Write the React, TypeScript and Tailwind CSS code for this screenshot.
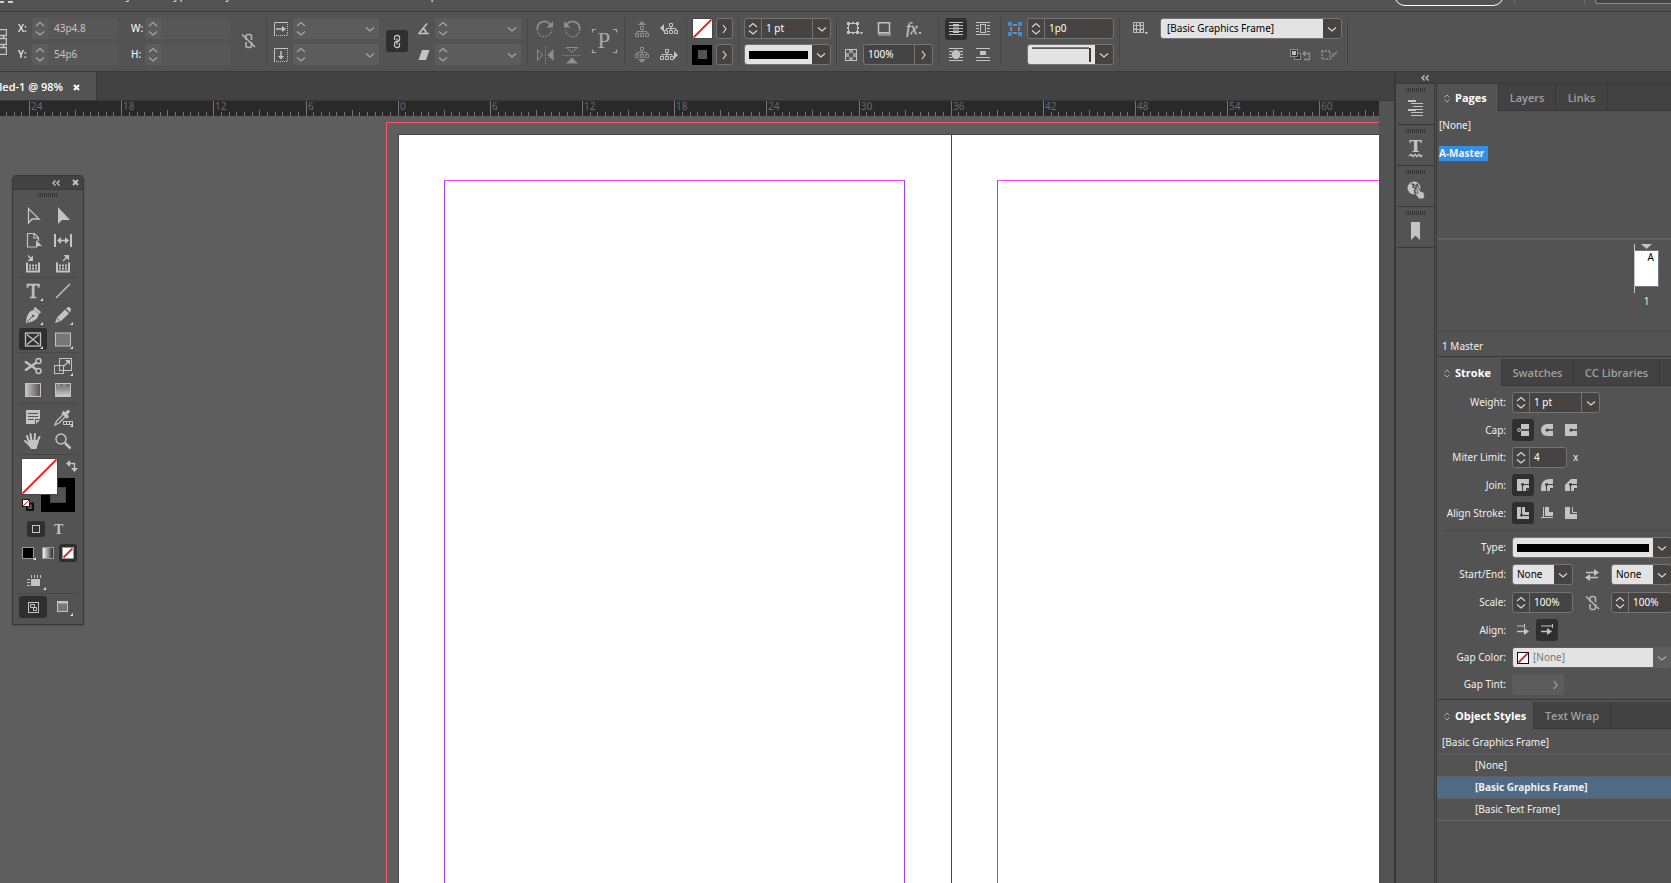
import type { ReactNode } from "react";

const ICON = "#c3c3c3";
const DIM = "#8e8e8e";

/* ---------- small shared parts ---------- */

function Chevron({ dir, dim }: { dir: "up" | "down" | "right"; dim?: boolean }) {
  const color = dim ? "#a8a8a8" : "#d6d6d6";
  const d = { up: "M1 5 L5 1.5 L9 5", down: "M1 1.5 L5 5 L9 1.5", right: "M2 1 L5 5 L2 9" }[dir];
  return (
    <svg
      width={dir === "right" ? 7 : 10}
      height={dir === "right" ? 10 : 6}
      fill="none"
      stroke={color}
      strokeWidth="1.2"
      aria-hidden="true"
    >
      <path d={d} />
    </svg>
  );
}

function Stepper({ name, flat }: { name: string; flat?: boolean }) {
  return (
    <span className={`flex w-4 shrink-0 flex-col items-center justify-between py-[3px] ${flat ? "bg-[#5c5c5c]" : ""}`}>
      <button aria-label={`Increase ${name}`}>
        <Chevron dir="up" dim={flat} />
      </button>
      <button aria-label={`Decrease ${name}`}>
        <Chevron dir="down" dim={flat} />
      </button>
    </span>
  );
}

type FieldProps = {
  name: string;
  id?: string;
  value?: string;
  width: string;
  stepper?: boolean;
  menu?: "down" | "right";
  flat?: boolean;
};

function Field({ name, id, value = "", width, stepper = true, menu, flat }: FieldProps) {
  return (
    <div
      className={`flex h-[21px] shrink-0 items-stretch overflow-hidden rounded-[3px] ${width} ${
        flat ? (menu ? "bg-[#5c5c5c]" : "bg-[#575757]") : "border border-[#747474] bg-[#454442]"
      }`}
    >
      {stepper && <Stepper name={name} flat={flat} />}
      <input
        id={id}
        aria-label={name}
        defaultValue={value}
        className={`w-0 min-w-0 flex-1 bg-transparent outline-none ${
          flat ? "pl-1.5 text-[#c4c4c4]" : "pl-1 text-white"
        } ${stepper && !flat ? "border-l border-[#747474]" : ""}`}
      />
      {menu && (
        <button
          aria-label={`${name} options`}
          className={`flex w-[18px] items-center justify-center ${flat ? "" : "border-l border-[#747474]"}`}
        >
          <Chevron dir={menu} dim={flat} />
        </button>
      )}
    </div>
  );
}

function Select({ name, id, value, width, dim, children }: { name: string; id?: string; value: string; width: string; dim?: boolean; children?: ReactNode }) {
  return (
    <div
      className={`flex h-[21px] shrink-0 items-stretch overflow-hidden rounded-[3px] border ${width} ${
        dim ? "border-[#5e5e5e] bg-[#5e5e5e]" : "border-[#747474] bg-[#454442]"
      }`}
    >
      <div className="flex flex-1 items-center bg-[#e3e3e3]">
        {children}
        <select
          id={id}
          aria-label={name}
          className={`h-full w-0 flex-1 appearance-none bg-transparent outline-none ${dim ? "pl-1 text-[#777]" : "text-black"} ${
            width === "w-[182px]" ? "pl-1.5" : "pl-1"
          }`}
        >
          <option>{value}</option>
        </select>
      </div>
      <span className="flex w-[18px] items-center justify-center">
        <Chevron dir="down" dim={dim} />
      </span>
    </div>
  );
}

function LineMenu({ name, id, width, children }: { name: string; id?: string; width: string; children: ReactNode }) {
  return (
    <button
      id={id}
      aria-label={name}
      aria-haspopup="listbox"
      className={`flex h-[21px] shrink-0 items-stretch overflow-hidden rounded-[3px] border border-[#747474] bg-[#454442] ${width}`}
    >
      <span className="flex min-w-0 flex-1 items-center bg-[#e3e3e3] px-1">{children}</span>
      <span className="flex w-[18px] shrink-0 items-center justify-center">
        <Chevron dir="down" />
      </span>
    </button>
  );
}

function IconButton({ name, active, size = "h-[22px] w-[22px]", children }: { name: string; active?: boolean; size?: string; children: ReactNode }) {
  return (
    <button
      aria-label={name}
      className={`flex shrink-0 items-center justify-center rounded-[3px] ${size} ${active ? "bg-[#2f2f2f]" : ""}`}
    >
      {children}
    </button>
  );
}

function Svg({ w, h, children }: { w: number; h: number; children: ReactNode }) {
  return (
    <svg width={w} height={h} viewBox={`0 0 ${w} ${h}`} fill="none" stroke={ICON} className="shrink-0" aria-hidden="true">
      {children}
    </svg>
  );
}

function Divider() {
  return <span className="h-[47px] w-px shrink-0 bg-[#474747]" />;
}

// two stacked 21px rows of the control bar
function Pair({ className = "", children }: { className?: string; children: ReactNode }) {
  return <div className={`grid shrink-0 grid-rows-[21px_21px] items-center gap-y-[5px] ${className}`}>{children}</div>;
}

function BrokenLink() {
  return (
    <Svg w={15} h={16}>
      <g stroke="#b5b5b5" strokeWidth="1.6">
        <path d="M5 7V3.5A2 2 0 0 1 7 1.5H8.5A2 2 0 0 1 10.5 3.5V7M5 9V12.5A2 2 0 0 0 7 14.5H8.5A2 2 0 0 0 10.5 12.5V9" />
        <path d="M1 1.5L14 14" />
      </g>
    </Svg>
  );
}

function NoneSwatch({ size, border }: { size: number; border: string }) {
  return (
    <svg width={size} height={size} viewBox={`0 0 ${size} ${size}`} className="shrink-0" aria-hidden="true">
      <rect x="0.5" y="0.5" width={size - 1} height={size - 1} fill="#fff" stroke={border} />
      <path d={`M1.5 ${size - 1.5}L${size - 1.5} 1.5`} stroke="#e82020" strokeWidth="1.8" />
    </svg>
  );
}

/* ---------- control bar icons ---------- */

function BoxArrow({ down }: { down?: boolean }) {
  return (
    <Svg w={14} h={14}>
      <path d="M0.5 14V0.5H14" />
      <path d="M13.5 2V14M2 13.5H14" strokeDasharray="1 1" />
      {down ? (
        <>
          <path d="M7 3V10" strokeWidth="1.5" />
          <path d="M4 8H10L7 11.500Z" fill={ICON} stroke="none" />
        </>
      ) : (
        <>
          <path d="M2 7H9" strokeWidth="1.5" />
          <path d="M8 4V10L12 7Z" fill={ICON} stroke="none" />
        </>
      )}
    </Svg>
  );
}

function Rotate({ ccw }: { ccw?: boolean }) {
  return (
    <Svg w={18} h={18}>
      <g transform={ccw ? "translate(18 0) scale(-1 1)" : undefined} stroke={DIM}>
        <path d="M1.5 9.5A7 7 0 0 1 14.5 5" strokeWidth="2" />
        <path d="M1.5 9.5A7 7 0 0 0 15.5 10" strokeWidth="1.5" strokeDasharray="1.5 1.5" />
        <path d="M17 1V7.5H10.500Z" fill={DIM} stroke="none" />
      </g>
    </Svg>
  );
}

function Flip({ vertical }: { vertical?: boolean }) {
  return (
    <Svg w={18} h={18}>
      <g transform={vertical ? "rotate(90 9 9)" : undefined} stroke={DIM}>
        <path d="M1.5 3.5L6.5 9L1.5 14.500Z" />
        <path d="M17.5 3V15L11.5 9Z" fill={DIM} stroke="none" />
        <path d="M9.5 1V18" strokeDasharray="1 1" />
      </g>
    </Svg>
  );
}

function Tree({ y = 0, x = 0, color }: { y?: number; x?: number; color: string }) {
  return (
    <g transform={`translate(${x} ${y})`} stroke={color}>
      <path d="M5.5 0.5H8.5V3.5H5.5ZM0.5 7.5H3.5V10.5H0.5ZM5.5 7.5H8.5V10.5H5.5ZM10.5 7.5H13.5V10.5H10.5ZM7 3.5V7.5M2 7.5V5.5H12V7.5" />
    </g>
  );
}

function WrapLines({ kind }: { kind: "none" | "box" | "shape" | "jump" }) {
  return (
    <Svg w={14} h={13}>
      {kind === "none" && (
        <>
          <path d="M0 0.5H14M0 3.5H14M0 6.5H14M0 9.5H14M0 12.5H14" />
          <rect x="4" y="2" width="6" height="9" fill={ICON} stroke="none" />
          <path d="M4 5H10M4 8H10" stroke="#2f2f2f" />
        </>
      )}
      {kind === "box" && (
        <>
          <path d="M0 0.5H14M0 3.5H3M11 3.5H14M0 6.5H3M11 6.5H14M0 9.5H3M11 9.5H14M0 12.5H14" />
          <rect x="4.5" y="2.5" width="5" height="8" />
        </>
      )}
      {kind === "shape" && (
        <>
          <path d="M0 0.5H14M0 3.5H3M11 3.5H14M0 6.5H2M12 6.5H14M0 9.5H3M11 9.5H14M0 12.5H14" />
          <circle cx="7" cy="6.5" r="4.5" fill={ICON} stroke="none" />
        </>
      )}
      {kind === "jump" && (
        <>
          <path d="M0 0.5H14M0 9.5H14M0 12.5H14" />
          <rect x="4" y="3" width="6" height="4" fill={ICON} stroke="none" />
        </>
      )}
    </Svg>
  );
}

function ControlBar() {
  return (
    <header className="flex h-[60px] shrink-0 items-start overflow-hidden border-b border-[#3a3a3a] bg-[#535353] pt-1.5">
      <div className="flex h-[47px] items-center">
        <Svg w={7} h={26}>
          <path d="M0 0.5H6.5V6.5H0M0 9.5H6.5V15.5H0M0 18.5H6.5V25.5H0M3.5 6.5V9.5M3.5 15.5V18.5" strokeWidth="1.5" />
        </Svg>
      </div>

      <Pair className="ml-[11px] grid-cols-[14px_86px]">
        <label htmlFor="pos-x" className="font-medium">X:</label>
        <Field id="pos-x" name="X" value="43p4.8" width="w-[86px]" flat />
        <label htmlFor="pos-y" className="font-medium">Y:</label>
        <Field id="pos-y" name="Y" value="54p6" width="w-[86px]" flat />
      </Pair>
      <Pair className="ml-[13px] grid-cols-[14px_86px]">
        <label htmlFor="size-w" className="font-medium">W:</label>
        <Field id="size-w" name="W" width="w-[86px]" flat />
        <label htmlFor="size-h" className="font-medium">H:</label>
        <Field id="size-h" name="H" width="w-[86px]" flat />
      </Pair>
      <button aria-label="Constrain proportions" className="mx-2.5 flex h-[45px] items-center">
        <BrokenLink />
      </button>
      <Divider />

      <Pair className="ml-[7px] grid-cols-[14px_86px] gap-x-[5px]">
        <BoxArrow />
        <Field name="Scale X" width="w-[86px]" menu="down" flat />
        <BoxArrow down />
        <Field name="Scale Y" width="w-[86px]" menu="down" flat />
      </Pair>
      <div className="mx-[7px] flex h-[46px] items-center">
        <IconButton name="Link scaling" active>
          <Svg w={8} h={15}>
            <path d="M1.5 6V3.5A2 2 0 0 1 3.5 1.5H4.5A2 2 0 0 1 6.5 3.5V5.5A2 2 0 0 1 4.5 7.5M6.5 9V11.5A2 2 0 0 1 4.5 13.5H3.5A2 2 0 0 1 1.5 11.5V9.5A2 2 0 0 1 3.5 7.5M4 4.5V10.5" strokeWidth="1.3" />
          </Svg>
        </IconButton>
      </div>
      <Pair className="ml-[3px] mr-1.5 grid-cols-[12px_86px] gap-x-[5px]">
        <Svg w={12} h={12}>
          <path d="M9 0.5L1 10.5H11M5 5.5Q8 7 8 10.5" strokeWidth="1.5" />
        </Svg>
        <Field name="Rotation" width="w-[86px]" menu="down" flat />
        <Svg w={12} h={12}>
          <path d="M4 1H11.5L8 11H0.500Z" fill={ICON} stroke="none" />
        </Svg>
        <Field name="Shear" width="w-[86px]" menu="down" flat />
      </Pair>
      <Divider />

      <Pair className="ml-2 grid-cols-[18px_18px] gap-x-[9px]">
        <button aria-label="Rotate clockwise"><Rotate /></button>
        <button aria-label="Rotate counter-clockwise"><Rotate ccw /></button>
        <button aria-label="Flip horizontal"><Flip /></button>
        <button aria-label="Flip vertical"><Flip vertical /></button>
      </Pair>
      <div className="ml-2.5 mr-1.5 flex h-[46px] items-center">
        <Svg w={27} h={26}>
          <path d="M1.5 4.5V1.5H5M22 1.5H25.5V4.5M1.5 21.5V24.5H5M22 24.5H25.5V21.5" stroke="#a8a8a8" strokeWidth="1.2" />
          <text x="13" y="20" textAnchor="middle" fontSize="23" fontFamily="Liberation Serif, serif" fill="#a8a8a8" stroke="none">P</text>
        </Svg>
      </div>
      <Divider />

      <Pair className="ml-[9px] mr-[7px] grid-cols-[16px_20px] gap-x-[9px]">
        <Svg w={16} h={18}>
          <path d="M8 1L12 5H4Z" fill={DIM} stroke="none" />
          <Tree x={1} y={6} color={DIM} />
        </Svg>
        <Svg w={20} h={13}>
          <path d="M1 6L5 2V10Z" fill={ICON} stroke="none" />
          <Tree x={5} y={1} color={ICON} />
        </Svg>
        <Svg w={16} h={18}>
          <Tree x={1} y={1} color={DIM} />
          <path d="M8 17L12 13H4Z" fill={DIM} stroke="none" />
        </Svg>
        <Svg w={20} h={13}>
          <Tree x={1} y={1} color={ICON} />
          <path d="M19 7L15 3V11Z" fill={ICON} stroke="none" />
        </Svg>
      </Pair>
      <Divider />

      <Pair className="mx-[5px] grid-cols-[20px_17px] gap-x-1">
        <NoneSwatch size={21} border="#484848" />
        <button aria-label="Fill options" className="flex h-[21px] items-center justify-center rounded-[3px] border border-[#747474] bg-[#454442]">
          <Chevron dir="right" />
        </button>
        <span className="flex h-5 w-5 items-center justify-center bg-black">
          <span className="h-[9px] w-[9px] bg-[#535353]" />
        </span>
        <button aria-label="Stroke options" className="flex h-[21px] items-center justify-center rounded-[3px] border border-[#747474] bg-[#454442]">
          <Chevron dir="right" />
        </button>
      </Pair>
      <Divider />

      <Pair className="mx-[5px]">
        <Field name="Stroke weight" value="1 pt" width="w-[87px]" menu="down" />
        <LineMenu name="Stroke style" width="w-[87px]">
          <span className="h-2 flex-1 bg-black" />
        </LineMenu>
      </Pair>
      <Divider />

      <Pair className="ml-2 mr-[5px]">
        <div className="flex items-center gap-3.5 pl-0.5">
          <button aria-label="Effects target">
            <Svg w={16} h={13}>
              <rect x="1.5" y="1.5" width="9" height="9" />
              <path d="M0 0H3V3H0ZM9 0H12V3H9ZM0 9H3V12H0ZM9 9H12V12H9ZM5 0H7V2H5ZM5 10H7V12H5ZM0 5H2V7H0ZM10 5H12V7H10Z" fill={ICON} stroke="none" />
              <path d="M12.500 10H16L14.5 12.500Z" fill={ICON} stroke="none" />
            </Svg>
          </button>
          <button aria-label="Drop shadow">
            <Svg w={14} h={14}>
              <path d="M1 11H14V14H1Z" fill="#8a8a8a" stroke="none" />
              <rect x="1.5" y="0.75" width="11" height="10" strokeWidth="1.5" />
            </Svg>
          </button>
          <button aria-label="Effects">
            <Svg w={18} h={16}>
              <text x="1" y="13" fontSize="16" fontStyle="italic" fontFamily="Liberation Serif, serif" fill={ICON} strokeWidth="0.3">fx</text>
              <path d="M13.5 11H16.5L15 13.500Z" fill={ICON} stroke="none" />
            </Svg>
          </button>
        </div>
        <div className="flex items-center gap-1.5">
          <Svg w={12} h={12}>
            <rect x="0.5" y="0.5" width="11" height="11" />
            <path d="M4 1H8V4H4ZM1 4H4V8H1ZM8 4H11V8H8ZM4 8H8V11H4Z" fill="#9a9a9a" stroke="none" />
          </Svg>
          <Field name="Opacity" value="100%" width="w-[70px]" stepper={false} menu="right" />
        </div>
      </Pair>
      <Divider />

      <Pair className="mx-1.5 grid-cols-[22px_22px] gap-x-[5px]">
        <IconButton name="No text wrap" active><WrapLines kind="none" /></IconButton>
        <IconButton name="Wrap around bounding box"><WrapLines kind="box" /></IconButton>
        <IconButton name="Wrap around object shape"><WrapLines kind="shape" /></IconButton>
        <IconButton name="Jump object"><WrapLines kind="jump" /></IconButton>
      </Pair>
      <Divider />

      <Pair className="ml-[7px] mr-[5px] grid-cols-[14px_87px] gap-x-[5px]">
        <Svg w={14} h={14}>
          <path d="M5 3H9M5 11H9M3 5V9M11 5V9" stroke="#8a8a8a" strokeWidth="2" />
          <path d="M0 0H4V4H0ZM10 0H14V4H10ZM0 10H4V14H0ZM10 10H14V14H10Z" fill="#318fe9" stroke="none" />
        </Svg>
        <Field name="Gap" value="1p0" width="w-[87px]" />
        <span />
        <LineMenu name="Corner shape" width="w-[87px]">
          <svg viewBox="0 0 60 17" className="h-[17px] min-w-0 flex-1" aria-hidden="true">
            <path d="M0 2H58" stroke="#5a5a5a" strokeWidth="2" />
            <path d="M59 2V16" stroke="#000" strokeWidth="1.5" />
          </svg>
        </LineMenu>
      </Pair>
      <Divider />

      <Pair className="ml-[13px] mr-[5px] grid-cols-[15px_182px] gap-x-3">
        <Svg w={15} h={13}>
          <path d="M0.5 0.5H3.5V3.5H0.5ZM4 0.500H7V3.500H4M7.500 0.500H10.500V3.500H7.500ZM0.500 4V7H3.500V4M7.500 4V7H10.500V4M0.500 7.500H3.500V10.500H0.500ZM4 7.500H7V10.500H4M7.500 7.500H10.500V10.500H7.500Z" />
          <path d="M11.500 10H15L13.5 12.500Z" fill={ICON} stroke="none" />
        </Svg>
        <Select name="Object style" value="[Basic Graphics Frame]" width="w-[182px]" />
        <span />
        <div className="flex items-center justify-end gap-2.5 pr-1">
          <button aria-label="Clear overrides">
            <Svg w={21} h={12}>
              <path d="M8 4.5H10.5V10.5H4.5V8" stroke={DIM} />
              <path d="M5 8V10H10V5H8V8Z" fill="#333" stroke="none" />
              <rect x="0.5" y="0.5" width="7" height="7" fill="#333" stroke={DIM} />
              <rect x="2" y="2" width="4" height="4" fill="#bbb" stroke="none" />
              <path d="M13 4.5H19.5V10.5H14M15.5 2L13 4.5L15.5 7" stroke={DIM} strokeWidth="1.3" />
            </Svg>
          </button>
          <button aria-label="Clear undefined attributes">
            <Svg w={17} h={12}>
              <rect x="1" y="2" width="8" height="8" stroke={DIM} strokeDasharray="2 1" strokeWidth="1.5" />
              <path d="M10 9L16 2M12 5H16M12 4V8" stroke={DIM} />
            </Svg>
          </button>
        </div>
      </Pair>
      <Divider />
    </header>
  );
}

/* ---------- menu strip ---------- */

function MenuStrip() {
  const menus = ["File", "Edit", "Layout", "Type", "Object", "Table", "View", "Window", "Help"];
  return (
    <nav className="flex h-3 shrink-0 items-end justify-between overflow-hidden border-b border-[#3a3a3a] bg-[#535353]">
      <div className="flex h-full items-end gap-4 pb-2">
        <span className="mr-[11px] flex gap-1">
          <span className="h-0.5 w-1 bg-[#d0d0d0]" />
          <span className="h-0.5 w-[5px] bg-[#d0d0d0]" />
        </span>
        {menus.map((m) => (
          <button key={m} className="h-4 text-[12px] leading-4 text-[#dcdcdc]">
            {m}
          </button>
        ))}
      </div>
      <div className="flex h-full items-start">
        <button aria-label="Workspace" className="-mt-4 h-[22px] w-[110px] rounded-full border border-white" />
        <span className="ml-2.5 h-1 w-px bg-[#6a6a6a]" />
        <span className="ml-[69px] mr-2.5 h-1 w-px bg-[#6a6a6a]" />
        <input aria-label="Search" className="-mt-4 h-5 w-[76px] rounded-bl-[3px] border border-r-0 border-[#8a8a8a] bg-[#454442]" />
      </div>
    </nav>
  );
}

/* ---------- document ---------- */

const MAJOR = 92.17;
const rulerMarks = ["24", "18", "12", "6", "0", "6", "12", "18", "24", "30", "36", "42", "48", "54", "60"];

function Ruler() {
  const ticks = [];
  for (let i = -3; i < 178; i++) {
    const x = Math.round(29 + (i * MAJOR) / 12) + 0.5;
    const top = i % 12 === 0 ? 0 : i % 6 === 0 ? 9 : 11;
    ticks.push(`M${x} ${top}V15`);
  }
  return (
    <svg className="block h-[15px] w-full bg-[#292929]" aria-hidden="true">
      <path d={ticks.join("")} stroke="#757575" fill="none" />
      {rulerMarks.map((m, i) => (
        <text key={i} x={Math.round(29 + i * MAJOR) + 2} y="9" fontSize="10" fill="#6a6a6a">
          {m}
        </text>
      ))}
    </svg>
  );
}

function Pasteboard() {
  return (
    <div className="flex min-h-0 flex-1 overflow-hidden bg-[#5e5e5e] pl-[386px] pt-1.5">
      <div className="flex w-full shrink-0 border-l border-t border-[#f5566a] pl-[11px] pt-[11px]">
        <div className="w-[554px] shrink-0 border border-b-0 border-[#444] bg-white pl-[45px] pr-[46px] pt-[45px]">
          <div className="h-full border border-b-0 border-[#9d3cf5] border-t-[#ff4dff]" />
        </div>
        <div className="w-[554px] shrink-0 border-t border-[#444] bg-white pl-[45px] pt-[45px]">
          <div className="h-full border border-b-0 border-[#9d3cf5] border-t-[#ff4dff]" />
        </div>
      </div>
    </div>
  );
}

/* ---------- floating tools ---------- */

const corner = <path d="M20 17V20H17Z" fill="#e0e0e0" stroke="none" />;

const tools: { name: string; active?: boolean; art: ReactNode }[][] = [
  [
    { name: "Selection", art: <path d="M5.5 2.5V17L9 13H16Z" strokeWidth="1.3" /> },
    { name: "Direct selection", art: <path d="M5 1V18L9 14H17Z" fill={ICON} stroke="none" /> },
    {
      name: "Page",
      art: (
        <>
          <path d="M13 17H4.5V3.5H11.5L15.5 7.5V11M11 3.5V8H15.5" strokeWidth="1.2" />
          <path d="M13 10V18L15 16H19Z" fill={ICON} stroke="none" />
        </>
      ),
    },
    {
      name: "Gap",
      art: (
        <>
          <path d="M2 4V17M18 4V17" strokeWidth="2" />
          <path d="M5 10.5H15" strokeWidth="1.5" />
          <path d="M4 10.5L8 7V14ZM16 10.5L12 7V14Z" fill={ICON} stroke="none" />
        </>
      ),
    },
    {
      name: "Content collector",
      art: (
        <>
          <path d="M4 8.5V17.5H16V8.5" strokeWidth="2" />
          <path d="M6 11.5H14M6 14.5H14" strokeWidth="2" strokeDasharray="2 1" />
          <path d="M5 1.5L9 5.5" strokeWidth="1.5" />
          <path d="M10 1.5V7H4.500Z" fill={ICON} stroke="none" />
        </>
      ),
    },
    {
      name: "Content placer",
      art: (
        <>
          <path d="M4 8.5V17.5H16V8.5" strokeWidth="2" />
          <path d="M6 11.5H14M6 14.5H14" strokeWidth="2" strokeDasharray="2 1" />
          <path d="M10 7L14 3" strokeWidth="1.5" />
          <path d="M16 1V6.5L10.5 1Z" fill={ICON} stroke="none" />
        </>
      ),
    },
  ],
  [
    {
      name: "Type",
      art: (
        <>
          <text x="10" y="17" textAnchor="middle" fontSize="19" fontFamily="DejaVu Serif, serif" fill={ICON} strokeWidth="0.6">T</text>
          {corner}
        </>
      ),
    },
    { name: "Line", art: <path d="M3 17L17 3" strokeWidth="1.5" /> },
    {
      name: "Pen",
      art: (
        <>
          <path d="M11.5 4.5L16 9L14 13.5Q10 17 3 18Q3 11 7 6.500Z" fill={ICON} stroke="none" />
          <path d="M12 2L18 7L16.5 9L10.5 3.500Z" fill={ICON} stroke="none" />
          <path d="M4 17L9.5 11.5" stroke="#535353" />
          <circle cx="10" cy="11" r="1.2" fill="#535353" stroke="none" />
          {corner}
        </>
      ),
    },
    {
      name: "Pencil",
      art: (
        <>
          <path d="M2 18L4 12.5L12 4.5L16 8.5L8 16ZM13 3.5L15 2Q18 2 18 5L17 7.500Z" fill={ICON} stroke="none" />
          <path d="M4 13L7.5 16.5" stroke="#535353" strokeWidth="0.8" />
          {corner}
        </>
      ),
    },
    {
      name: "Rectangle frame",
      active: true,
      art: (
        <>
          <rect x="2.5" y="4" width="15" height="13" strokeWidth="1.3" />
          <path d="M4 5.5L16 15.5M16 5.5L4 15.5" strokeWidth="1.3" />
          {corner}
        </>
      ),
    },
    {
      name: "Rectangle",
      art: (
        <>
          <rect x="2.5" y="4" width="15" height="13" fill="#77777a" />
          {corner}
        </>
      ),
    },
  ],
  [
    {
      name: "Scissors",
      art: (
        <>
          <circle cx="15.5" cy="5" r="2.5" strokeWidth="1.5" />
          <circle cx="15.5" cy="15" r="2.5" strokeWidth="1.5" />
          <path d="M2 5.5L13.5 13.5M2 14.5L13.5 6.5" strokeWidth="2.2" />
        </>
      ),
    },
    {
      name: "Free transform",
      art: (
        <>
          <rect x="6.5" y="2.5" width="12" height="12" />
          <rect x="1.5" y="9.5" width="9" height="8" />
          <path d="M11 10L15 6" strokeWidth="1.3" />
          <path d="M17 4V9L12 4Z" fill={ICON} stroke="none" />
          {corner}
        </>
      ),
    },
    { name: "Gradient swatch", art: <rect x="2.5" y="3.5" width="15" height="13" fill="url(#grad-h)" /> },
    {
      name: "Gradient feather",
      art: (
        <>
          <rect x="2.5" y="3.5" width="15" height="13" fill="url(#grad-v)" />
          <path d="M4 5.5H16M7 8.5H17" stroke="#8c8c8c" strokeWidth="3" strokeDasharray="3 3" />
        </>
      ),
    },
  ],
  [
    {
      name: "Note",
      art: (
        <>
          <path d="M3 3H17V13L13 17H3Z" fill={ICON} stroke="none" />
          <path d="M5 6.5H15M5 9.5H15M5 12.5H11M12.5 17V12.5H17" stroke="#535353" />
        </>
      ),
    },
    {
      name: "Eyedropper",
      art: (
        <>
          <path d="M2 18L3.5 14L10.5 7L13 9L6 16Z" strokeWidth="1.3" />
          <path d="M9.5 5L15 10.5M12 8L16 3.5" strokeWidth="3.2" />
          <rect x="10.5" y="14.5" width="9" height="3" />
          <path d="M13.5 14V18M16.5 14V18" />
          {corner}
        </>
      ),
    },
    {
      name: "Hand",
      art: (
        <>
          <path d="M6 11L4 5M8.5 10L7.500 3M11.5 10L12 3M14 11L16.500 6M6.500 14L2 10" strokeWidth="2" strokeLinecap="round" />
          <path d="M5.500 9H14.500L16 9.5L13.5 18H8L4.500 13Z" fill={ICON} stroke="none" />
        </>
      ),
    },
    {
      name: "Zoom",
      art: (
        <>
          <circle cx="8" cy="8" r="5" strokeWidth="1.5" />
          <path d="M12 12L17.5 17.5" strokeWidth="2.5" />
        </>
      ),
    },
  ],
];

function Grip() {
  return (
    <svg width="20" height="4" className="shrink-0" aria-hidden="true">
      <path d="M0 2H20" stroke="#333" strokeWidth="4" strokeDasharray="1 1" />
    </svg>
  );
}

function DoubleChevron() {
  return (
    <svg width="8" height="6" className="block" fill="none" stroke="#c8c8c8" strokeWidth="1.3" aria-hidden="true">
      <path d="M3.5 0.5L1 3L3.5 5.5M7.5 0.5L5 3L7.5 5.5" />
    </svg>
  );
}

function ToolsPanel() {
  return (
    <aside className="absolute left-3 top-[103px] w-[72px] rounded-t-[4px] border border-[#383838] bg-[#535353] pb-1.5 shadow-sm">
      <div className="flex h-[14px] items-center justify-end gap-3 border-b border-[#383838] bg-[#424242] pr-1">
        <button aria-label="Collapse tools"><DoubleChevron /></button>
        <button aria-label="Close tools">
          <Svg w={7} h={7}><path d="M1 1L6 6M6 1L1 6" strokeWidth="2" /></Svg>
        </button>
      </div>
      <div className="flex h-[14px] items-start justify-center pt-[3px]"><Grip /></div>

      <svg width="0" height="0" className="block" aria-hidden="true">
        <linearGradient id="grad-h"><stop stopColor="#c8c8c8" /><stop offset="1" stopColor="#555052" /></linearGradient>
        <linearGradient id="grad-w"><stop stopColor="#fff" /><stop offset="1" stopColor="#222" /></linearGradient>
        <linearGradient id="grad-v" x2="0" y2="1"><stop stopColor="#666" /><stop offset="1" stopColor="#ccc" /></linearGradient>
      </svg>

      {tools.map((group, g) => (
        <div key={g} className="px-[5px]">
          <div className="grid grid-cols-2">
            {group.map((t) => (
              <button key={t.name} aria-label={t.name} className="flex h-6 items-center justify-center">
                <span className={`flex h-[22px] w-7 items-center justify-center rounded-[3px] ${t.active ? "bg-[#2f2f2f]" : ""}`}>
                  <svg width="22" height="20" viewBox="0 0 20 20" fill="none" stroke={ICON} className="overflow-visible" aria-hidden="true">
                    {t.art}
                  </svg>
                </span>
              </button>
            ))}
          </div>
          <hr className="my-px border-[#484848]" />
        </div>
      ))}

      {/* fill swatch lies over the stroke swatch */}
      <div className="relative h-[61px]">
        <button aria-label="Stroke" className="absolute left-7 top-[22px] flex h-[34px] w-[34px] items-center justify-center bg-black">
          <span className="h-4 w-4 border border-[#444] bg-[#535353]" />
        </button>
        <button aria-label="Fill" className="absolute left-2 top-[2px]"><NoneSwatch size={37} border="#484848" /></button>
        <button aria-label="Swap fill and stroke" className="absolute left-[53px] top-1">
          <Svg w={12} h={12}>
            <path d="M3 3.5H8.5V9" strokeWidth="1.3" />
            <path d="M0 3.5L4 0V7ZM8.5 12L5 8H12Z" fill={ICON} stroke="none" />
          </Svg>
        </button>
        <button aria-label="Default fill and stroke" className="absolute left-[9px] top-[43px]">
          <Svg w={12} h={12}>
            <rect x="5" y="4.5" width="6" height="6.5" stroke="#111" strokeWidth="2" />
            <rect x="0.5" y="0.5" width="7" height="7" fill="#fff" stroke="#222" />
            <path d="M1 7L7 1" stroke="#e82020" />
          </Svg>
        </button>
      </div>

      <div className="flex h-6 items-center gap-[9px] pl-3.5">
        <IconButton name="Formatting affects container" active size="h-4 w-[18px]">
          <Svg w={8} h={8}><rect x="0.5" y="0.5" width="7" height="7" /></Svg>
        </IconButton>
        <button aria-label="Formatting affects text" className="font-['Liberation_Serif',serif] text-[14px] font-bold text-[#c3c3c3]">T</button>
      </div>
      <div className="flex h-6 items-center pl-[9px]">
        <button aria-label="Apply color">
          <Svg w={15} h={13}>
            <rect x="0.5" y="0.5" width="11" height="11" fill="#000" stroke="#999" />
            <path d="M14 10V13H11Z" fill="#e0e0e0" stroke="none" />
          </Svg>
        </button>
        <button aria-label="Apply gradient" className="ml-[5px]">
          <Svg w={12} h={12}><rect x="0.5" y="0.5" width="11" height="11" fill="url(#grad-w)" stroke="#999" /></Svg>
        </button>
        <span className="ml-[5px]">
          <IconButton name="Apply none" active size="h-[18px] w-[18px]"><NoneSwatch size={12} border="#999" /></IconButton>
        </span>
      </div>
      <button aria-label="View options" className="ml-3.5 mt-2 block h-5">
        <Svg w={20} h={16}>
          <rect x="4" y="4" width="9" height="7" fill={ICON} stroke="none" />
          <path d="M4 1.5H14" strokeWidth="3" strokeDasharray="1 2" />
          <path d="M1.5 4V12" strokeWidth="3" strokeDasharray="1 2" />
          <path d="M19 12V15H16Z" fill="#e0e0e0" stroke="none" />
        </Svg>
      </button>
      <hr className="mx-[5px] border-[#484848]" />
      <div className="grid grid-cols-2 px-[5px] pt-0.5">
        <span className="flex justify-center">
          <IconButton name="Normal view" active size="h-[22px] w-7">
            <Svg w={11} h={11}>
              <rect x="0.5" y="0.5" width="10" height="10" />
              <path d="M2.5 2.5H6.5V5.5H2.5ZM5.5 5.5H8.5V8.5H5.5Z" />
            </Svg>
          </IconButton>
        </span>
        <span className="flex justify-center">
          <IconButton name="Screen mode" size="h-[22px] w-7">
            <Svg w={20} h={20}>
              <rect x="4.5" y="4.5" width="10" height="10" fill="#777" />
              <path d="M4 5.5H15" strokeWidth="2" />
              <path d="M20 16V19H17Z" fill="#e0e0e0" stroke="none" />
            </Svg>
          </IconButton>
        </span>
      </div>
    </aside>
  );
}

function DocumentArea() {
  return (
    <main className="relative flex min-w-0 flex-1 flex-col">
      <div className="flex h-7 shrink-0 bg-[#424242]">
        <div className="flex w-[97px] items-center justify-end gap-2.5 overflow-hidden whitespace-nowrap border-r border-[#383838] bg-[#535353] pr-4 pt-0.5 font-['Open_Sans',sans-serif] text-[11px] font-semibold text-white">
          <span>Untitled-1 @ 98%</span>
          <button aria-label="Close document">
            <Svg w={7} h={7}><path d="M1 1L6 6M6 1L1 6" stroke="#fff" strokeWidth="2" /></Svg>
          </button>
        </div>
      </div>
      <div className="flex min-h-0 flex-1 border-t border-[#383838]">
        <div className="flex min-w-0 flex-1 flex-col">
          <Ruler />
          <Pasteboard />
        </div>
        <div className="w-[15px] shrink-0 bg-[#535353]" />
      </div>
      <ToolsPanel />
    </main>
  );
}

/* ---------- right dock ---------- */

function DockIcons() {
  const items = [
    {
      name: "Paragraph styles",
      art: (
        <>
          <path d="M1 2H9M1 11H9" strokeWidth="2" />
          <path d="M4 4.500H16M6 7.500H16M6 10.500H16M4 13.500H16M4 16.500H16" />
        </>
      ),
    },
    {
      name: "Character styles",
      art: (
        <>
          <text x="8.5" y="12" textAnchor="middle" fontSize="17" fontWeight="bold" fontFamily="DejaVu Serif, serif" fill={ICON} stroke="none">T</text>
          <path d="M2 16L4 14.5L6 16.5L8 14.5L10 16.5L12 14.5L14 16.5L15 15" strokeWidth="1.5" />
        </>
      ),
    },
    {
      name: "Hyperlinks",
      art: (
        <>
          <circle cx="7" cy="7" r="6.500" fill={ICON} stroke="none" />
          <path d="M4.500 2.500L7 4L6 6L9 7L7.500 10L9 14M11 3L9 4.500L12 6" stroke="#535353" strokeWidth="1.600" />
          <path d="M9.5 5.500Q11 4.500 11.500 6L13 10L17 11.500L17.500 16L16 18H12L8 13L10 12L11 12.500Z" fill={ICON} stroke="#535353" strokeWidth="0.800" />
        </>
      ),
    },
    { name: "Bookmarks", art: <path d="M4 0H13V18L8.5 13.5L4 18Z" fill={ICON} stroke="none" /> },
  ];
  return (
    <div className="flex w-[38px] shrink-0 flex-col border-r border-[#383838]">
      {items.map((it) => (
        <button key={it.name} aria-label={it.name} className="flex h-[41px] flex-col items-center gap-[7px] border-b border-[#383838] pt-1">
          <Grip />
          <Svg w={18} h={18}>{it.art}</Svg>
        </button>
      ))}
    </div>
  );
}

function Tabs({ tabs }: { tabs: { label: string; width: string }[] }) {
  return (
    <div role="tablist" className="flex h-[27px] shrink-0 bg-[#424242] font-['Open_Sans',sans-serif] text-[11px] font-semibold">
      {tabs.map((t, i) => (
        <button
          key={t.label}
          role="tab"
          aria-selected={i === 0}
          className={`flex shrink-0 items-center gap-[5px] whitespace-nowrap border-r border-[#383838] pt-0.5 ${t.width} ${
            i === 0 ? "bg-[#535353] pl-[7px] font-bold text-white" : "justify-center border-b text-[#a0a0a0]"
          }`}
        >
          {i === 0 && (
            <svg width="6" height="9" fill="none" stroke="#b0b0b0" aria-hidden="true">
              <path d="M0.5 3.5L3 1L5.5 3.5M0.5 5.5L3 8L5.5 5.5" />
            </svg>
          )}
          {t.label}
        </button>
      ))}
      <span className="flex-1 border-b border-[#383838]" />
    </div>
  );
}

function PagesPanel() {
  return (
    <section className="flex h-[273px] shrink-0 flex-col border-b border-[#383838]">
      <Tabs
        tabs={[
          { label: "Pages", width: "w-[62px]" },
          { label: "Layers", width: "w-[57px]" },
          { label: "Links", width: "w-[52px]" },
        ]}
      />
      <div className="flex h-[129px] shrink-0 flex-col items-start gap-[13px] border-b-2 border-[#5f5f5f] pl-0.5 pt-[7px]">
        <button className="h-[15px] leading-[15px]">[None]</button>
        <button className="h-[15px] w-[49px] whitespace-nowrap bg-[#318fe9] text-left font-bold leading-[15px]">A-Master</button>
      </div>
      <div className="flex flex-1 justify-end pr-3 pt-1">
        <figure className="flex w-[25px] flex-col items-center">
          <div className="w-full border-l border-[#c3c3c3] pb-1.5">
            <svg width="24" height="6" className="block" aria-hidden="true">
              <path d="M6 0H17L11.5 5Z" fill={ICON} />
            </svg>
            <div className="h-[37px] border border-l-0 border-[#77778a] bg-white pr-1 text-right leading-3 text-black">A</div>
          </div>
          <figcaption className="leading-4">1</figcaption>
        </figure>
      </div>
      <p className="h-[25px] shrink-0 border-t border-[#4a4a4a] pl-[5px] leading-7">1 Master</p>
    </section>
  );
}

function Row({ label, id, children }: { label: string; id?: string; children: ReactNode }) {
  return (
    <div className="flex shrink-0 items-center">
      {id ? (
        <label htmlFor={id} className="w-[69px] shrink-0 whitespace-nowrap text-right">{label}</label>
      ) : (
        <span className="w-[69px] shrink-0 whitespace-nowrap text-right">{label}</span>
      )}
      <div className="ml-1.5 flex items-center gap-0.5">{children}</div>
    </div>
  );
}

function StrokeIcon({ d, cut }: { d: string; cut: ReactNode }) {
  return (
    <Svg w={12} h={12}>
      <path d={d} fill={ICON} stroke="none" />
      {cut}
    </Svg>
  );
}

const dot = (x: number, y: number) => <circle cx={x} cy={y} r="1.5" fill="#3a3a3a" stroke="none" />;
const joinCut = (
  <>
    <path d="M5.5 12V5.5H12" stroke="#3a3a3a" />
    <path d="M9 9V12H12V9Z" fill="#4a4a4a" stroke="none" />
    {dot(5.5, 5.5)}
  </>
);

function StrokePanel() {
  return (
    <section className="flex shrink-0 flex-col border-b border-[#383838]">
      <Tabs
        tabs={[
          { label: "Stroke", width: "w-[65px]" },
          { label: "Swatches", width: "w-[72px]" },
          { label: "CC Libraries", width: "w-[86px]" },
        ]}
      />
      <div className="flex flex-col gap-1.5 pt-1.5">
        <Row label="Weight:" id="weight">
          <Field id="weight" name="Weight" value="1 pt" width="w-[88px]" menu="down" />
        </Row>
        <Row label="Cap:">
          <IconButton name="Butt cap" active>
            <StrokeIcon d="M4 0H12V12H4Z" cut={<><path d="M3.5 6H12" stroke="#2f2f2f" strokeWidth="1.5" /><circle cx="2" cy="6" r="1.5" /></>} />
          </IconButton>
          <IconButton name="Round cap">
            <StrokeIcon d="M6 0H12V12H6A6 6 0 0 1 6 0Z" cut={<><path d="M6 6H12" stroke="#3a3a3a" strokeWidth="1.5" />{dot(6, 6)}</>} />
          </IconButton>
          <IconButton name="Projecting cap">
            <StrokeIcon d="M0 0H12V12H0Z" cut={<><path d="M6 6H12" stroke="#3a3a3a" strokeWidth="1.5" />{dot(6, 6)}</>} />
          </IconButton>
        </Row>
        <Row label="Miter Limit:" id="miter">
          <Field id="miter" name="Miter Limit" value="4" width="w-[55px]" />
          <span className="ml-1">x</span>
        </Row>
        <Row label="Join:">
          <IconButton name="Miter join" active><StrokeIcon d="M0 0H12V12H0Z" cut={joinCut} /></IconButton>
          <IconButton name="Round join"><StrokeIcon d="M12 0H9Q0 0 0 9V12H12Z" cut={joinCut} /></IconButton>
          <IconButton name="Bevel join"><StrokeIcon d="M12 0H6L0 6V12H12Z" cut={joinCut} /></IconButton>
        </Row>
        <Row label="Align Stroke:">
          <IconButton name="Align center" active>
            <StrokeIcon d="M0 0H8V5H12V12H0Z" cut={<><path d="M4.5 0V8.5H12" stroke="#2f2f2f" />{dot(4.5, 8)}</>} />
          </IconButton>
          <IconButton name="Align inside">
            <StrokeIcon d="M4 0H8V5H12V9H4Z" cut={<path d="M2.5 0V10.5H12M0 10.500H3" />} />
          </IconButton>
          <IconButton name="Align outside">
            <StrokeIcon d="M0 0H5V7H12V12H0Z" cut={<path d="M7.5 0V5.5H12" />} />
          </IconButton>
        </Row>
      </div>
      <hr className="ml-1.5 mt-1.5 border-[#484848]" />
      <div className="flex flex-col gap-1.5 pt-1.5">
        <Row label="Type:" id="type">
          <LineMenu id="type" name="Type" width="w-[160px]">
            <span className="h-2 flex-1 bg-black" />
          </LineMenu>
        </Row>
        <Row label="Start/End:" id="start">
          <Select id="start" name="Start" value="None" width="w-[61px]" />
          <button aria-label="Swap start and end" className="mx-2.5">
            <Svg w={14} h={14}>
              <path d="M1 4.5H10M4 9.5H13" strokeWidth="1.5" />
              <path d="M9 1V8L14 4.5ZM5 6V13L0 9.500Z" fill={ICON} stroke="none" />
            </Svg>
          </button>
          <Select name="End" value="None" width="w-[61px]" />
        </Row>
      </div>
      <div className="flex flex-col gap-1.5 pb-1 pt-[7px]">
        <Row label="Scale:" id="scale">
          <Field id="scale" name="Start scale" value="100%" width="w-[61px]" />
          <button aria-label="Link scales" className="ml-2.5 mr-[9px]"><BrokenLink /></button>
          <Field name="End scale" value="100%" width="w-[61px]" />
        </Row>
        <Row label="Align:">
          <IconButton name="Extend arrow tip">
            <Svg w={12} h={12}>
              <path d="M0 2H7M7.5 0V4" />
              <path d="M0 7.500H8" strokeWidth="1.500" />
              <path d="M7 4V11L12 7.5Z" fill={ICON} stroke="none" />
            </Svg>
          </IconButton>
          <IconButton name="Place arrow tip" active>
            <Svg w={12} h={12}>
              <path d="M0 2H11M11.5 0V4" />
              <path d="M0 7.500H7" strokeWidth="1.500" />
              <path d="M6 4V11L11 7.5Z" fill={ICON} stroke="none" />
            </Svg>
          </IconButton>
        </Row>
        <Row label="Gap Color:" id="gap-color">
          <Select id="gap-color" name="Gap Color" value="[None]" width="w-[160px]" dim>
            <span className="ml-1"><NoneSwatch size={12} border="#111" /></span>
          </Select>
        </Row>
        <Row label="Gap Tint:" id="gap-tint">
          <Field id="gap-tint" name="Gap Tint" width="w-[52px]" stepper={false} menu="right" flat />
        </Row>
      </div>
    </section>
  );
}

function StylesPanel() {
  return (
    <section className="flex flex-1 flex-col">
      <Tabs
        tabs={[
          { label: "Object Styles", width: "w-[97px]" },
          { label: "Text Wrap", width: "w-[77px]" },
        ]}
      />
      <p className="h-[25px] pl-[5px] leading-[27px]">[Basic Graphics Frame]</p>
      <ul className="border-t border-[#606060]">
        <li className="h-[22px] border-b border-[#606060] pl-[38px] leading-[21px]">[None]</li>
        <li className="h-[22px] border-b border-[#606060] bg-[#4e6a84] pl-[38px] font-bold leading-[21px]">[Basic Graphics Frame]</li>
        <li className="h-[22px] border-b border-[#606060] pl-[38px] leading-[21px]">[Basic Text Frame]</li>
      </ul>
    </section>
  );
}

function Dock() {
  return (
    <aside className="flex w-[277px] shrink-0 flex-col border-l-2 border-[#383838] bg-[#535353]">
      <div className="flex h-3 shrink-0 items-center border-b border-[#383838] bg-[#424242] pl-[25px]">
        <button aria-label="Expand panels"><DoubleChevron /></button>
      </div>
      <div className="flex min-h-0 flex-1 pl-px">
        <DockIcons />
        <div className="ml-px flex min-w-0 flex-1 flex-col gap-0.5 overflow-hidden border-l border-[#383838]">
          <PagesPanel />
          <StrokePanel />
          <StylesPanel />
        </div>
      </div>
    </aside>
  );
}

export default function App() {
  return (
    <div className="flex h-screen flex-col overflow-hidden bg-[#535353] font-['Noto_Sans',sans-serif] text-[10px] text-[#f0f0f0]">
      <MenuStrip />
      <ControlBar />
      <div className="flex min-h-0 flex-1">
        <DocumentArea />
        <Dock />
      </div>
    </div>
  );
}
